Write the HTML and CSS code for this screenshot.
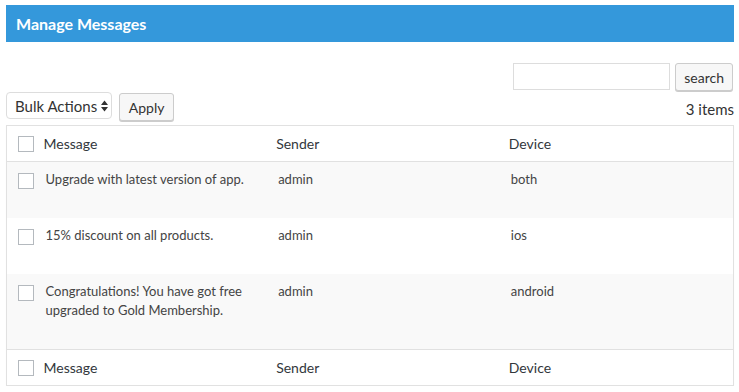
FILE: index.html
```html
<!DOCTYPE html>
<html lang="en">
<head>
<meta charset="UTF-8" />
<meta name="viewport" content="width=device-width, initial-scale=1" />
<title>Manage Messages</title>
<link rel="stylesheet" href="styles.css">
</head>
<body>

<div class="wrap">
  <h1 class="page-title">Manage Messages</h1>

  <form class="search-box">
    <input type="search" class="search-input" />
    <button type="button" class="btn">search</button>
  </form>

  <div class="tablenav">
    <div class="bulk">
      <span class="select">Bulk Actions
        <svg width="7" height="12" viewBox="0 0 7 12"><path d="M3.5 0.5 L7 5 L0 5 Z M3.5 11.5 L7 7 L0 7 Z" fill="#333"/></svg>
      </span>
      <button type="button" class="btn btn-apply">Apply</button>
    </div>
    <span class="count">3 items</span>
  </div>

  <table class="list">
    <colgroup>
      <col class="c-check" /><col /><col /><col />
    </colgroup>
    <thead>
      <tr>
        <th class="check"><span class="box"></span></th>
        <th>Message</th>
        <th>Sender</th>
        <th>Device</th>
      </tr>
    </thead>
    <tbody>
      <tr class="alt">
        <td class="check"><span class="box"></span></td>
        <td>Upgrade with latest version of app.</td>
        <td>admin</td>
        <td>both</td>
      </tr>
      <tr>
        <td class="check"><span class="box"></span></td>
        <td>15% discount on all products.</td>
        <td>admin</td>
        <td>ios</td>
      </tr>
      <tr class="alt">
        <td class="check"><span class="box"></span></td>
        <td>Congratulations! You have got free upgraded to Gold Membership.</td>
        <td>admin</td>
        <td>android</td>
      </tr>
    </tbody>
    <tfoot>
      <tr>
        <th class="check"><span class="box"></span></th>
        <th>Message</th>
        <th>Sender</th>
        <th>Device</th>
      </tr>
    </tfoot>
  </table>
</div>

</body>
</html>
```

FILE: styles.css
```css
body {
  margin: 0;
  font-family: Lato, "Open Sans", sans-serif;
  color: #444;
  background: #fff;
}
.wrap {
  padding: 5px 5px 0 6px;
}
.page-title {
  margin: 0;
  height: 37px;
  line-height: 38px;
  padding-left: 10px;
  background: #3498db;
  color: #fff;
  font-size: 16px;
  font-weight: bold;
}
.search-box {
  display: flex;
  justify-content: flex-end;
  gap: 5px;
  margin: 21px 0 0;
  padding-right: 1px;
}
.search-input {
  width: 157px;
  height: 27px;
  box-sizing: border-box;
  border: 1px solid #ddd;
  margin: 0;
}
.btn {
  height: 28px;
  box-sizing: border-box;
  padding: 0 8px;
  border: 1px solid #ccc;
  border-radius: 3px;
  background: #f7f7f7;
  box-shadow: 0 1px 0 #ccc;
  font-family: inherit;
  font-size: 14px;
  color: #333;
}
.tablenav {
  display: flex;
  justify-content: space-between;
  align-items: flex-end;
  margin-top: 2px;
  height: 28px;
}
.bulk {
  display: flex;
  gap: 7px;
}
.select {
  display: flex;
  align-items: center;
  gap: 4px;
  height: 27px;
  box-sizing: border-box;
  padding: 0 3px 0 8px;
  border: 1px solid #ddd;
  border-radius: 4px;
  font-size: 15px;
  color: #333;
}
.btn-apply {
  margin-top: 1px;
  width: 55px;
}
.count {
  font-size: 15px;
  color: #333;
  padding-bottom: 3px;
}
.list {
  width: 728px;
  margin-top: 4px;
  border: 1px solid #e1e1e1;
  border-collapse: collapse;
  table-layout: fixed;
  box-shadow: 0 1px 1px rgba(0, 0, 0, 0.04);
}
.c-check {
  width: 29px;
}
.list th {
  text-align: left;
  font-weight: normal;
  font-size: 14px;
  color: #32373c;
  height: 35px;
  padding: 0 8px;
}
.list thead tr {
  border-bottom: 1px solid #e1e1e1;
}
.list tfoot tr {
  border-top: 1px solid #e1e1e1;
}
.list td {
  vertical-align: top;
  font-size: 13px;
  line-height: 19px;
  padding: 8px 10px 29px;
  color: #444;
}
.list tr.alt td {
  background: #f9f9f9;
}
.list .check {
  padding: 0 0 0 11px;
}
.list td.check {
  padding-top: 11px;
}
.box {
  display: block;
  width: 14px;
  height: 14px;
  border: 1px solid #b4b9be;
  background: #fff;
}
.list th.check .box {
  margin-top: 1px;
}
```
